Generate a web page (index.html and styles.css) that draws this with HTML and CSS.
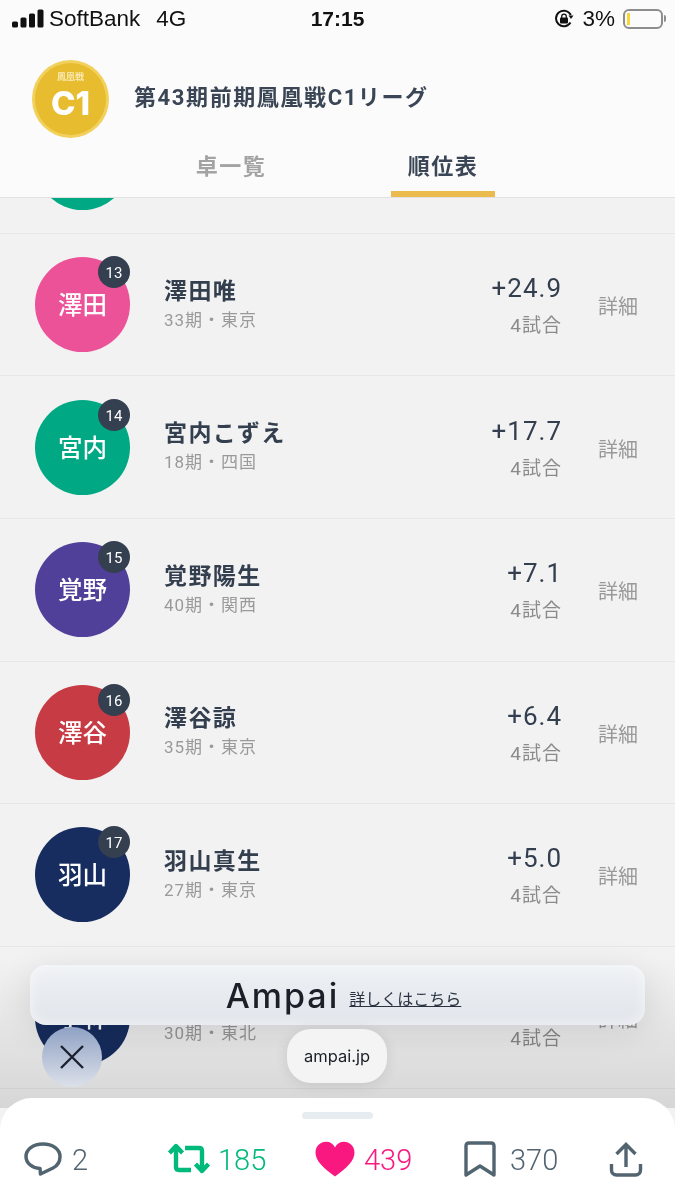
FILE: index.html
```html
<!DOCTYPE html>
<html lang="ja">
<head>
    <meta charset="UTF-8">
    <title>第43期前期鳳凰戦C1リーグ</title>
    <link rel="stylesheet" href="styles.css">
</head>
<body>
<div class="screen">
    <header class="top">
        <div class="status">
            <div class="status-left">
                <svg class="signal" width="32" height="20" viewBox="0 0 32 20"><rect x="0" y="12.500" width="6" height="6" rx="1.500"/><rect x="8.500" y="8.500" width="6" height="10" rx="1.500"/><rect x="17" y="4.500" width="6" height="14" rx="1.500"/><rect x="25.500" y="0.500" width="6" height="18" rx="1.500"/></svg>
                <span class="carrier">SoftBank</span>
                <span class="network">4G</span>
            </div>
            <div class="clock">17:15</div>
            <div class="status-right">
                <svg width="20" height="20" viewBox="0 0 20 20"><path d="M16.500 13.500A7.800 7.800 0 1 1 16.800 6" fill="none" stroke="#111" stroke-width="2"/><path d="M14.500 6.500h5l-2.500 3.500z" fill="#111"/><rect x="6" y="8.500" width="8" height="6" rx="1" fill="#111"/><path d="M7.700 9V7.500a2.300 2.300 0 0 1 4.600 0V9" fill="none" stroke="#111" stroke-width="1.300"/></svg>
                <span class="percent">3%</span>
                <div class="battery"><div class="battery-level"></div></div>
                <div class="battery-cap"></div>
            </div>
        </div>
        <div class="league">
            <div class="medal">
                <span class="medal-small">鳳凰戦</span>
                <span class="medal-big">C1</span>
            </div>
            <h1 class="league-title">第43期前期鳳凰戦C1リーグ</h1>
        </div>
        <nav class="tabs">
            <div class="tab">卓一覧</div>
            <div class="tab tab-active">順位表</div>
        </nav>
    </header>

    <main class="list-wrap">
        <div class="list">
            <div class="row">
                <div class="avatar green"></div>
            </div>
            <div class="row">
                <div class="avatar pink">澤田<span class="rank">13</span></div>
                <div class="info"><div class="name">澤田唯</div><div class="sub">33期・東京</div></div>
                <div class="score"><div class="points">+24.9</div><div class="games">4試合</div></div>
                <div class="detail">詳細</div>
            </div>
            <div class="row">
                <div class="avatar green">宮内<span class="rank">14</span></div>
                <div class="info"><div class="name">宮内こずえ</div><div class="sub">18期・四国</div></div>
                <div class="score"><div class="points">+17.7</div><div class="games">4試合</div></div>
                <div class="detail">詳細</div>
            </div>
            <div class="row">
                <div class="avatar purple">覚野<span class="rank">15</span></div>
                <div class="info"><div class="name">覚野陽生</div><div class="sub">40期・関西</div></div>
                <div class="score"><div class="points">+7.1</div><div class="games">4試合</div></div>
                <div class="detail">詳細</div>
            </div>
            <div class="row">
                <div class="avatar red">澤谷<span class="rank">16</span></div>
                <div class="info"><div class="name">澤谷諒</div><div class="sub">35期・東京</div></div>
                <div class="score"><div class="points">+6.4</div><div class="games">4試合</div></div>
                <div class="detail">詳細</div>
            </div>
            <div class="row">
                <div class="avatar navy">羽山<span class="rank">17</span></div>
                <div class="info"><div class="name">羽山真生</div><div class="sub">27期・東京</div></div>
                <div class="score"><div class="points">+5.0</div><div class="games">4試合</div></div>
                <div class="detail">詳細</div>
            </div>
            <!-- name and points of this row are under the banner -->
            <div class="row">
                <div class="avatar navy">小林</div>
                <div class="info"><div class="name">&nbsp;</div><div class="sub">30期・東北</div></div>
                <div class="score"><div class="points">&nbsp;</div><div class="games">4試合</div></div>
                <div class="detail">詳細</div>
            </div>
        </div>
        <div class="fade"></div>
        <div class="ad-banner">
            <span class="ad-name">Ampai</span>
            <a class="ad-link">詳しくはこちら</a>
        </div>
        <div class="ad-close">
            <svg width="28" height="28" viewBox="0 0 28 28"><path d="M3 3l22 22M25 3L3 25" stroke="#1c2230" stroke-width="2.400" fill="none"/></svg>
        </div>
        <div class="ad-domain">ampai.jp</div>
    </main>

    <footer class="sheet">
        <div class="handle"></div>
        <div class="actions">
            <div class="action action-reply">
                <svg width="40" height="36" viewBox="0 0 40 36"><path d="M20 3C10 3 3 8.500 3 15.500 3 22 9 27 17 27.500L17.500 33 30 27c5-2.500 7-7 7-11.500C37 8.500 30 3 20 3z" fill="none" stroke="#536471" stroke-width="3.500" stroke-linejoin="round"/></svg>
                <span>2</span>
            </div>
            <div class="action action-rt">
                <svg width="44" height="32" viewBox="0 0 44 32"><path d="M2.500 10L9 3l6.500 7M9 4v20c0 2 1 3 3 3h12M18 5h14c2 0 3 1 3 3v20M28.500 21l6.500 7 6.500-7" fill="none" stroke="#00ba7c" stroke-width="4.400" stroke-linejoin="round"/></svg>
                <span>185</span>
            </div>
            <div class="action action-like">
                <svg width="40" height="36" viewBox="0 0 40 36"><path d="M20 35.500C8 26.500.5 20 .5 11.500.5 5 5.500.8 11 .8c4 0 7.300 2 9 5.700C21.700 2.800 25 .8 29 .8c5.500 0 10.500 4.200 10.500 10.700C39.500 20 32 26.500 20 35.500z" fill="#f91880"/></svg>
                <span>439</span>
            </div>
            <div class="action action-mark">
                <svg width="32" height="36" viewBox="0 0 32 36"><path d="M2 34V5c0-2 1-3 3-3h22c2 0 3 1 3 3v29L16 25z" fill="none" stroke="#536471" stroke-width="3.400" stroke-linejoin="round"/></svg>
                <span>370</span>
            </div>
            <div class="action action-share">
                <svg width="34" height="36" viewBox="0 0 34 36"><path d="M17 26V3M7.500 13L17 3.500 26.500 13M2.500 23v6c0 3 2 5 5 5h19c3 0 5-2 5-5v-6" fill="none" stroke="#536471" stroke-width="3.400"/></svg>
            </div>
        </div>
    </footer>
</div>
</body>
</html>
```

FILE: styles.css
```css
* {
    box-sizing: border-box;
}
html, body {
    margin: 0;
    padding: 0;
}
body {
    font-family: Roboto, "Noto Sans CJK JP", sans-serif;
    background-color: #f2f2f2;
    color: #2f3b4b;
}
.screen {
    width: 675px;
    height: 1200px;
    display: flex;
    flex-direction: column;
    overflow: hidden;
}

/* header */
.top {
    height: 198px;
    background-color: #fbfbfb;
    border-bottom: 1px solid #e2e2e2;
    flex-shrink: 0;
}
.status {
    height: 37px;
    display: flex;
    align-items: center;
    padding: 0 9px 0 12px;
    position: relative;
    color: #111;
    font-family: "Liberation Sans", sans-serif;
    font-size: 22.500px;
}
.status-left {
    display: flex;
    align-items: center;
}
.signal {
    fill: #111;
    margin-right: 5px;
}
.network {
    margin-left: 16px;
}
.clock {
    position: absolute;
    left: 0;
    right: 0;
    text-align: center;
    font-weight: bold;
    font-size: 21px;
}
.status-right {
    margin-left: auto;
    display: flex;
    align-items: center;
}
.percent {
    margin: 0 8px 0 8px;
}
.battery {
    width: 40px;
    height: 20px;
    border: 2px solid #8d8d8d;
    border-radius: 6px;
    padding: 2px;
}
.battery-level {
    width: 3px;
    height: 100%;
    background-color: #f7d63d;
}
.battery-cap {
    width: 2px;
    height: 7px;
    margin-left: 1px;
    background-color: #8d8d8d;
    border-radius: 0 2px 2px 0;
}
.league {
    display: flex;
    align-items: center;
    height: 79px;
    margin-top: 22px;
    padding-left: 32px;
}
.medal {
    width: 77px;
    height: 78px;
    border-radius: 50%;
    background-color: #e8bc2f;
    border: 3px solid #f1d05c;
    color: #fff;
    display: flex;
    flex-direction: column;
    align-items: center;
    justify-content: center;
    padding-bottom: 10px;
}
.medal-small {
    font-size: 9px;
    line-height: 11px;
    font-weight: 500;
    color: #fbeec0;
    font-family: "Noto Sans CJK JP", sans-serif;
    margin-bottom: 7px;
}
.medal-big {
    font-family: Inter, sans-serif;
    font-size: 33px;
    line-height: 28px;
    font-weight: 800;
}
.league-title {
    margin: 0 0 8px 25px;
    font-size: 22px;
    font-weight: 700;
    color: #3a4555;
    letter-spacing: 1.600px;
}
.tabs {
    display: flex;
    padding-left: 179px;
    gap: 108px;
    margin-top: 9px;
}
.tab {
    width: 104px;
    height: 50px;
    text-align: center;
    font-size: 22px;
    font-weight: 700;
    color: #a3a3a3;
    letter-spacing: 1.500px;
    line-height: 40px;
}
.tab-active {
    color: #3a4555;
    border-bottom: 6px solid #ecbb4d;
}

/* list */
.list-wrap {
    flex: 1;
    position: relative;
    overflow: hidden;
}
.list {
    margin-top: -106.800px;
}
.row {
    height: 142.600px;
    display: flex;
    align-items: center;
    padding: 0 36px 0 35px;
    border-bottom: 1.500px solid #e7e7e7;
}
.avatar {
    width: 95px;
    height: 95px;
    border-radius: 50%;
    color: #fff;
    font-family: "Noto Sans CJK JP", sans-serif;
    font-size: 24.500px;
    font-weight: 500;
    display: flex;
    align-items: center;
    justify-content: center;
    position: relative;
    flex-shrink: 0;
    padding-bottom: 2px;
}
.pink { background-color: #ec5298; }
.green { background-color: #00a884; }
.purple { background-color: #51409a; }
.red { background-color: #c63b44; }
.navy { background-color: #172d60; }
.rank {
    position: absolute;
    top: -1px;
    right: 0;
    width: 32px;
    height: 32px;
    border-radius: 50%;
    background-color: #343f50;
    font-family: Roboto, sans-serif;
    font-size: 15px;
    font-weight: 400;
    text-align: center;
    line-height: 34px;
}
.info {
    margin-left: 34px;
    margin-bottom: 2px;
}
.name {
    font-size: 23px;
    font-weight: 700;
    color: #333e4e;
    letter-spacing: 1.400px;
    line-height: 32px;
}
.sub {
    font-size: 17px;
    color: #9a9a9a;
    letter-spacing: 1px;
    line-height: 24px;
}
.score {
    margin-left: auto;
    margin-top: 9px;
    text-align: right;
}
.points {
    font-size: 26px;
    color: #333e4e;
    letter-spacing: 1px;
    line-height: 34px;
}
.games {
    font-size: 19px;
    color: #8b8b8b;
    letter-spacing: 1px;
    line-height: 42px;
}
.detail {
    width: 41px;
    margin-left: 36px;
    margin-top: 2px;
    font-size: 20px;
    color: #999;
    white-space: nowrap;
}

/* ad over the list */
.fade {
    position: absolute;
    left: 0;
    right: 0;
    bottom: 0;
    height: 150px;
    background: linear-gradient(#fff, #e2e2e2);
    mix-blend-mode: multiply;
}
.ad-banner {
    position: absolute;
    left: 30px;
    top: 767px;
    width: 615px;
    height: 60px;
    padding-left: 12px;
    border-radius: 16px;
    background: linear-gradient(#eef1f5, #e1e5eb);
    box-shadow: 0 6px 34px rgba(0, 0, 0, 0.1), inset 0 0 14px rgba(255, 255, 255, 0.6);
    display: flex;
    align-items: center;
    justify-content: center;
    gap: 10px;
    color: #1b1f27;
}
.ad-name {
    font-family: Inter, sans-serif;
    font-size: 34px;
    font-weight: 500;
    letter-spacing: 2px;
}
.ad-link {
    font-size: 16px;
    text-decoration: underline;
    color: #2a3240;
    margin-top: 5px;
}
.ad-close {
    position: absolute;
    left: 42px;
    top: 829px;
    width: 60px;
    height: 60px;
    border-radius: 50%;
    background: linear-gradient(#8fa1c4, #dce1ea);
    display: flex;
    align-items: center;
    justify-content: center;
}
.ad-domain {
    position: absolute;
    left: 287px;
    top: 831px;
    width: 100px;
    height: 54px;
    border-radius: 24px;
    background-color: #f4f4f4;
    box-shadow: 0 2px 14px rgba(0, 0, 0, 0.1);
    font-family: Inter, sans-serif;
    font-size: 16.500px;
    color: #1b1f27;
    text-align: center;
    line-height: 54px;
}

/* bottom sheet */
.sheet {
    height: 102px;
    flex-shrink: 0;
    background-color: #fff;
    border-radius: 32px 32px 0 0;
    padding-top: 14px;
    margin-top: -10px;
    position: relative;
}
.handle {
    width: 71px;
    height: 7px;
    margin: 0 auto;
    border-radius: 4px;
    background-color: #e6ecf0;
}
.actions {
    display: flex;
    align-items: center;
    padding: 22px 0 0 23px;
}
.action {
    display: flex;
    align-items: center;
    font-size: 29px;
    font-weight: 300;
    color: #536471;
    gap: 9px;
}
.action span {
    margin-top: 2px;
}
.action-reply {
    width: 144px;
}
.action-rt {
    width: 148px;
    color: #00ba7c;
    gap: 7px;
}
.action-like {
    width: 149px;
    color: #f91880;
}
.action-mark {
    width: 145px;
    gap: 14px;
}
```
